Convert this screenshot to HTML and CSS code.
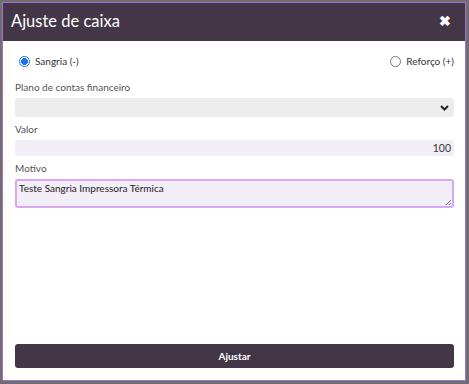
FILE: index.html
```html
<!DOCTYPE html>
<html lang="pt">
<head>
<meta charset="utf-8">
<link rel="stylesheet" href="styles.css">
</head>
<body>
<div class="modal">
  <div class="modal-header">
    <span class="modal-title">Ajuste de caixa</span>
    <span class="close">&#x2716;</span>
  </div>
  <div class="modal-body">
    <div class="radios">
      <label class="radio"><span class="dot checked"></span>Sangria (-)</label>
      <label class="radio"><span class="dot"></span>Reforço (+)</label>
    </div>
    <div class="field">
      <div class="label">Plano de contas financeiro</div>
      <div class="select">
        <svg class="chev" width="9" height="6" viewBox="0 0 9 6"><path d="M1 1 L4.5 4.5 L8 1" fill="none" stroke="#222" stroke-width="2"/></svg>
      </div>
    </div>
    <div class="field">
      <div class="label">Valor</div>
      <div class="input">100</div>
    </div>
    <div class="field">
      <div class="label">Motivo</div>
      <div class="textarea">Teste Sangria Impressora Térmica
        <svg class="grip" width="7" height="7" viewBox="0 0 7 7"><path d="M6 1 L1 6 M6 4 L4 6" stroke="#888" stroke-width="1"/></svg>
      </div>
    </div>
    <div class="spacer"></div>
    <button class="btn">Ajustar</button>
  </div>
</div>
</body>
</html>
```
FILE: styles.css
```css
html, body { margin: 0; padding: 0; }
body {
  width: 469px; height: 384px;
  background: #6f6f6f;
  padding: 2px 3px 3px 2px;
  box-sizing: border-box;
  font-family: Lato, "Noto Sans", sans-serif;
}
.modal {
  height: 379px;
  border: 1px solid #a36fd6;
  background: #fff;
  display: flex;
  flex-direction: column;
  box-sizing: border-box;
}
.modal-header {
  height: 38px;
  background: #433647;
  display: flex;
  align-items: center;
  justify-content: space-between;
  padding: 0 14px 0 8px;
  color: #fff;
  flex: none;
}
.modal-title { font-size: 16.5px; letter-spacing: 0; margin-top: -2px; }
.close { font-size: 14px; font-weight: bold; margin-top: -3px; }
.modal-body {
  flex: 1;
  display: flex;
  flex-direction: column;
  padding: 13px 11px 12px 12px;
  font-size: 10px;
  color: #333;
}
.radios { display: flex; justify-content: space-between; height: 14px; align-items: center; margin-left: 4px; }
.radio { display: flex; align-items: center; gap: 5px; }
.dot {
  width: 11px; height: 11px; border-radius: 50%;
  border: 1px solid #777; box-sizing: border-box; background: #fff;
}
.dot.checked { border: 1px solid #1a73e8; background: radial-gradient(circle, #1a73e8 0 3.2px, #fff 3.6px); }
.field { margin-top: 6px; }
.radios + .field { margin-top: 13px; }
.label { height: 13px; line-height: 13px; margin-bottom: 4px; color: #555; }
.select {
  height: 19px; background: #ececec; border-radius: 3px;
  display: flex; align-items: center; justify-content: flex-end; padding-right: 5px;
}
.input {
  height: 16px; background: #f3edf8; border-radius: 3px;
  text-align: right; padding-right: 3px; line-height: 17px; font-size: 10.5px; color: #333;
}
.textarea {
  height: 29px; box-sizing: border-box; background: #f3edf8; border: 2px solid #d7a8f2;
  border-radius: 3px; padding: 1px 2px; color: #222; position: relative; line-height: 13px;
}
.grip { position: absolute; right: 0; bottom: 0; }
.spacer { flex: 1; }
.btn {
  height: 24px; background: #433647; border: none; border-radius: 3px; color: #fff;
  font-family: inherit; font-size: 10px; font-weight: 700; padding: 0;
}
```
